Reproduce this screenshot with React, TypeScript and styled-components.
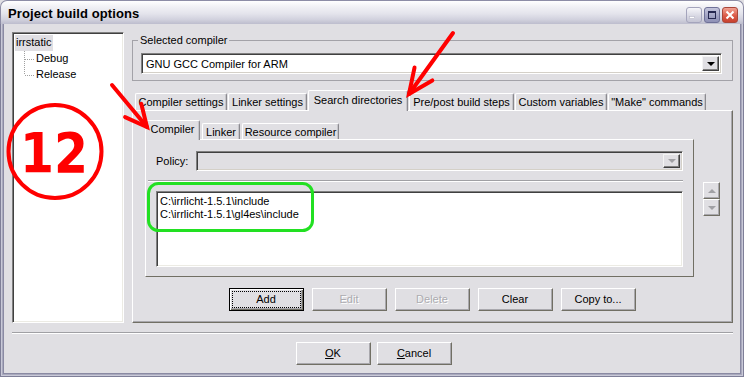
import React from "react";
import styled, { createGlobalStyle, css } from "styled-components";

const FACE = "#E0DFE3";

const GlobalStyle = createGlobalStyle`
  html, body { margin: 0; padding: 0; background: #ffffff; }
  body {
    font-family: "Liberation Sans", Arial, sans-serif;
    font-size: 11px;
    color: #000;
    overflow: hidden;
  }
  * { box-sizing: border-box; }
`;

const Window = styled.div`
  position: relative;
  width: 744px;
  height: 377px;
  display: flex;
  flex-direction: column;
  background: ${FACE};
`;

const TitleBar = styled.div`
  height: 24px;
  flex: none;
  display: flex;
  align-items: center;
  padding: 2px 5px 0 7px;
  border: 1px solid #8d8da6;
  border-bottom: none;
  border-radius: 7px 7px 0 0;
  background: linear-gradient(
    180deg,
    #ffffff 0%,
    #f1f1f5 25%,
    #e4e4ec 55%,
    #d2d2de 80%,
    #bdbdcd 100%
  );
`;

const TitleText = styled.div`
  flex: 1;
  font-size: 13px;
  font-weight: bold;
  color: #000;
  letter-spacing: 0.1px;
`;

const TitleButtons = styled.div`
  display: flex;
  gap: 2px;
  margin-top: 2px;
`;

const TitleBtn = styled.div<{ $kind: "min" | "max" | "close" }>`
  width: 16px;
  height: 16px;
  border-radius: 3px;
  display: flex;
  align-items: center;
  justify-content: center;
  ${(p) =>
    p.$kind === "min" &&
    css`
      border: 1px solid #a4a4bc;
      background: linear-gradient(180deg, #f6f6fa, #d6d6e2 60%, #c4c4d4);
    `}
  ${(p) =>
    p.$kind === "max" &&
    css`
      border: 1px solid #6f7198;
      background: linear-gradient(180deg, #c4c5dc, #9fa1c2 60%, #8f91b6);
    `}
  ${(p) =>
    p.$kind === "close" &&
    css`
      border: 1px solid #a9473a;
      background: linear-gradient(180deg, #f1a394, #dc5a48 55%, #c8412f);
    `}
`;

const Body = styled.div`
  flex: 1;
  display: flex;
  flex-direction: column;
  border: solid #7f7f98;
  border-width: 0 1px 1px 1px;
  padding: 8px 10px 11px 11px;
  box-shadow: inset 1px 0 #c9c9d8, inset -1px 0 #c9c9d8, inset 0 -1px #c9c9d8,
    inset 2px 0 #a9a9bd, inset -2px 0 #a9a9bd, inset 0 -2px #a9a9bd,
    inset 3px 0 #8a8aa3, inset -3px 0 #8a8aa3, inset 0 -3px #8a8aa3;
`;

const MainRow = styled.div`
  display: flex;
  gap: 8px;
  height: 291px;
`;

const Tree = styled.div`
  width: 112px;
  background: #fff;
  border: 1px solid;
  border-color: #808080 #ffffff #ffffff #808080;
  box-shadow: inset 1px 1px #404040, inset -1px -1px #ecebe4;
  padding: 2px 0 0 2px;
  display: flex;
  flex-direction: column;
`;

const TreeRow = styled.div`
  height: 16px;
  display: flex;
  align-items: center;
`;

const TreeText = styled.span<{ $selected?: boolean }>`
  padding: 1px 2px 2px 1px;
  background: ${(p) => (p.$selected ? FACE : "transparent")};
  line-height: 13px;
`;

const RightCol = styled.div`
  flex: 1;
  display: flex;
  flex-direction: column;
`;

const GroupBox = styled.fieldset`
  margin: 0;
  padding: 5px 10px 6px 8px;
  border: 1px solid #a3a2a8;
  min-width: 0;
`;

const GroupLegend = styled.legend`
  padding: 0 2px;
  margin-left: -3px;
  line-height: 16px;
  font-size: 11px;
`;

const Combo = styled.div<{ $disabled?: boolean }>`
  height: ${(p) => (p.$disabled ? 20 : 21)}px;
  display: flex;
  align-items: stretch;
  background: ${(p) => (p.$disabled ? FACE : "#fff")};
  border: 1px solid;
  border-color: #808080 #ffffff #ffffff #808080;
  box-shadow: inset 1px 1px #404040, inset -1px -1px #d4d0c8;
  padding: 2px;
  flex: 1;
`;

const ComboText = styled.div`
  flex: 1;
  display: flex;
  align-items: center;
  padding-left: 2px;
`;

const DropBtn = styled.div`
  width: 17px;
  display: flex;
  align-items: center;
  justify-content: center;
  background: ${FACE};
  border: 1px solid;
  border-color: #f4f4f4 #404040 #404040 #f4f4f4;
  box-shadow: inset -1px -1px #808080;
`;

const Triangle = styled.span<{ $dir?: "up" | "down"; $gray?: boolean }>`
  width: 0;
  height: 0;
  border-left: 4px solid transparent;
  border-right: 4px solid transparent;
  ${(p) =>
    p.$dir === "up"
      ? css`
          border-bottom: 4px solid ${p.$gray ? "#a0a0a4" : "#000"};
        `
      : css`
          border-top: 4px solid ${p.$gray ? "#a0a0a4" : "#000"};
        `}
`;

const TabStrip = styled.div<{ $inner?: boolean }>`
  display: flex;
  align-items: flex-end;
  height: ${(p) => (p.$inner ? 19 : 20)}px;
  gap: ${(p) => (p.$inner ? 2 : 1)}px;
  padding-left: ${(p) => (p.$inner ? 0 : 3)}px;
  margin-top: ${(p) => (p.$inner ? 0 : 9)}px;
  flex: none;
`;

const Tab = styled.div<{ $w: number; $active?: boolean; $inner?: boolean }>`
  width: ${(p) => p.$w}px;
  height: ${(p) =>
    p.$active ? (p.$inner ? 20 : 21) : p.$inner ? 16 : 17}px;
  margin-bottom: ${(p) => (p.$active ? -1 : 0)}px;
  position: relative;
  z-index: ${(p) => (p.$active ? 2 : 0)};
  background: ${FACE};
  border: 1px solid;
  border-bottom: none;
  border-color: #ffffff #8b8a8f #ffffff #ffffff;
  box-shadow: inset -1px 0 #c6c5ca;
  border-radius: 2px 2px 0 0;
  display: flex;
  align-items: center;
  justify-content: center;
  padding-bottom: ${(p) => (p.$active ? 3 : 0)}px;
  white-space: nowrap;
`;

const TabPanel = styled.div`
  flex: 1;
  display: flex;
  flex-direction: column;
  border: 1px solid;
  border-color: #ffffff #716f64 #716f64 #ffffff;
  box-shadow: inset -1px -1px #a9a8ad;
  padding: 9px 0 9px 0;
`;

const PanelTop = styled.div`
  display: flex;
  align-items: flex-start;
  padding-left: 12px;
`;

const InnerTabs = styled.div`
  width: 549px;
  display: flex;
  flex-direction: column;
`;

const InnerPanel = styled.div`
  border: 1px solid;
  border-color: #ffffff #716f64 #716f64 #ffffff;
  padding: 11px 10px 9px 10px;
  display: flex;
  flex-direction: column;
`;

const PolicyRow = styled.div`
  display: flex;
  align-items: center;
  height: 20px;
`;

const PolicyLabel = styled.div`
  width: 40px;
  flex: none;
`;

const Separator = styled.div`
  height: 2px;
  border-top: 1px solid #a0a0a4;
  border-bottom: 1px solid #ffffff;
`;

const InnerSeparator = styled(Separator)`
  margin: 9px 0 9px -8px;
`;

const ListBox = styled.div`
  height: 76px;
  background: #fff;
  border: 1px solid;
  border-color: #808080 #ffffff #ffffff #808080;
  box-shadow: inset 1px 1px #404040, inset -1px -1px #ecebe4;
  padding: 3px 3px;
  line-height: 13px;
`;

const SpinCol = styled.div`
  margin: 62px 0 0 9px;
  display: flex;
  flex-direction: column;
`;

const SpinBtn = styled.div`
  width: 17px;
  height: 17px;
  display: flex;
  align-items: center;
  justify-content: center;
  background: ${FACE};
  border: 1px solid;
  border-color: #ffffff #716f64 #716f64 #ffffff;
  box-shadow: inset -1px -1px #a9a8ad;
`;

const ButtonRow = styled.div`
  display: flex;
  justify-content: center;
  gap: 8px;
  margin-top: 11px;
  padding-right: 1px;
`;

const Button = styled.div<{ $default?: boolean; $disabled?: boolean }>`
  width: 75px;
  height: 23px;
  display: flex;
  padding: 2px;
  background: ${FACE};
  border: 1px solid;
  border-color: #ffffff #716f64 #716f64 #ffffff;
  box-shadow: inset -1px -1px #a9a8ad;
  color: ${(p) => (p.$disabled ? "#acabb0" : "#000")};
  text-shadow: ${(p) => (p.$disabled ? "1px 1px #ffffff" : "none")};
  ${(p) =>
    p.$default &&
    css`
      border-color: #000;
      box-shadow: inset 1px 1px #ffffff, inset -1px -1px #716f64,
        inset -2px -2px #a9a8ad;
    `}
`;

const ButtonLabel = styled.span<{ $focus?: boolean }>`
  flex: 1;
  display: flex;
  align-items: center;
  justify-content: center;
  border: 1px dotted ${(p) => (p.$focus ? "#000" : "transparent")};
  padding-bottom: 1px;
`;

const Accel = styled.span`
  text-decoration: underline;
`;

const FooterSep = styled(Separator)`
  margin-top: 9px;
`;

const FooterButtons = styled.div`
  display: flex;
  justify-content: center;
  gap: 6px;
  margin-top: 8px;
  padding-left: 2px;
`;

const Overlay = styled.svg`
  position: absolute;
  left: 0;
  top: 0;
  pointer-events: none;
  z-index: 10;
`;

function TreeConnector({ last }: { last?: boolean }) {
  return (
    <svg width="20" height="16" viewBox="0 0 20 16">
      <line
        x1="9.5"
        y1="0"
        x2="9.5"
        y2={last ? 8 : 16}
        stroke="#a0a0a0"
        strokeDasharray="1 1"
      />
      <line x1="10" y1="8.5" x2="19" y2="8.5" stroke="#a0a0a0" strokeDasharray="1 1" />
    </svg>
  );
}

function Arrow({
  x1,
  y1,
  x2,
  y2,
  len,
  spread,
}: {
  x1: number;
  y1: number;
  x2: number;
  y2: number;
  len: number;
  spread: number;
}) {
  const a = Math.atan2(y1 - y2, x1 - x2);
  const s = (spread * Math.PI) / 180;
  const w1 = [x2 + len * Math.cos(a + s), y2 + len * Math.sin(a + s)];
  const w2 = [x2 + len * Math.cos(a - s), y2 + len * Math.sin(a - s)];
  return (
    <g stroke="#ff0000" strokeWidth="4" strokeLinecap="round" fill="none">
      <line x1={x1} y1={y1} x2={x2} y2={y2} />
      <polyline points={`${w1[0]},${w1[1]} ${x2},${y2} ${w2[0]},${w2[1]}`} strokeLinejoin="miter" />
    </g>
  );
}

const outerTabs: { label: string; w: number; active?: boolean }[] = [
  { label: "Compiler settings", w: 92 },
  { label: "Linker settings", w: 79 },
  { label: "Search directories", w: 100, active: true },
  { label: "Pre/post build steps", w: 105 },
  { label: "Custom variables", w: 92 },
  { label: "\"Make\" commands", w: 98 },
];

const innerTabs: { label: string; w: number; active?: boolean }[] = [
  { label: "Compiler", w: 55, active: true },
  { label: "Linker", w: 38 },
  { label: "Resource compiler", w: 97 },
];

const actionButtons: { label: string; def?: boolean; disabled?: boolean }[] = [
  { label: "Add", def: true },
  { label: "Edit", disabled: true },
  { label: "Delete", disabled: true },
  { label: "Clear" },
  { label: "Copy to..." },
];

export default function App() {
  return (
    <>
      <GlobalStyle />
      <Window>
        <TitleBar>
          <TitleText>Project build options</TitleText>
          <TitleButtons>
            <TitleBtn $kind="min">
              <svg width="14" height="14" viewBox="0 0 14 14">
                <rect x="2.5" y="8.5" width="5" height="2" fill="#ffffff" stroke="#b8b8c8" strokeWidth="0.6" />
              </svg>
            </TitleBtn>
            <TitleBtn $kind="max">
              <svg width="14" height="14" viewBox="0 0 14 14">
                <rect x="3.5" y="3.5" width="7" height="7" fill="none" stroke="#262850" strokeWidth="1" />
                <line x1="3.5" y1="4.5" x2="10.5" y2="4.5" stroke="#262850" strokeWidth="1" />
              </svg>
            </TitleBtn>
            <TitleBtn $kind="close">
              <svg width="14" height="14" viewBox="0 0 14 14">
                <path d="M3.5 3.5 L10.5 10.5 M10.5 3.5 L3.5 10.5" stroke="#ffffff" strokeWidth="2" />
              </svg>
            </TitleBtn>
          </TitleButtons>
        </TitleBar>
        <Body>
          <MainRow>
            <Tree>
              <TreeRow>
                <TreeText $selected>irrstatic</TreeText>
              </TreeRow>
              <TreeRow>
                <TreeConnector />
                <TreeText>Debug</TreeText>
              </TreeRow>
              <TreeRow>
                <TreeConnector last />
                <TreeText>Release</TreeText>
              </TreeRow>
            </Tree>
            <RightCol>
              <GroupBox>
                <GroupLegend>Selected compiler</GroupLegend>
                <Combo>
                  <ComboText>GNU GCC Compiler for ARM</ComboText>
                  <DropBtn>
                    <Triangle $dir="down" />
                  </DropBtn>
                </Combo>
              </GroupBox>
              <TabStrip>
                {outerTabs.map((t) => (
                  <Tab key={t.label} $w={t.w} $active={t.active}>
                    {t.label}
                  </Tab>
                ))}
              </TabStrip>
              <TabPanel>
                <PanelTop>
                  <InnerTabs>
                    <TabStrip $inner>
                      {innerTabs.map((t) => (
                        <Tab key={t.label} $w={t.w} $active={t.active} $inner>
                          {t.label}
                        </Tab>
                      ))}
                    </TabStrip>
                    <InnerPanel>
                      <PolicyRow>
                        <PolicyLabel>Policy:</PolicyLabel>
                        <Combo $disabled>
                          <ComboText />
                          <DropBtn>
                            <Triangle $dir="down" $gray />
                          </DropBtn>
                        </Combo>
                      </PolicyRow>
                      <InnerSeparator />
                      <ListBox>
                        <div>{"C:\\irrlicht-1.5.1\\include"}</div>
                        <div>{"C:\\irrlicht-1.5.1\\gl4es\\include"}</div>
                      </ListBox>
                    </InnerPanel>
                  </InnerTabs>
                  <SpinCol>
                    <SpinBtn>
                      <Triangle $dir="up" $gray />
                    </SpinBtn>
                    <SpinBtn>
                      <Triangle $dir="down" $gray />
                    </SpinBtn>
                  </SpinCol>
                </PanelTop>
                <ButtonRow>
                  {actionButtons.map((b) => (
                    <Button key={b.label} $default={b.def} $disabled={b.disabled}>
                      <ButtonLabel $focus={b.def}>{b.label}</ButtonLabel>
                    </Button>
                  ))}
                </ButtonRow>
              </TabPanel>
            </RightCol>
          </MainRow>
          <FooterSep />
          <FooterButtons>
            <Button>
              <ButtonLabel>
                <Accel>O</Accel>K
              </ButtonLabel>
            </Button>
            <Button>
              <ButtonLabel>
                <Accel>C</Accel>ancel
              </ButtonLabel>
            </Button>
          </FooterButtons>
        </Body>
        <Overlay width="744" height="377" viewBox="0 0 744 377">
          <circle cx="55" cy="151.5" r="46.5" fill="none" stroke="#ff0000" strokeWidth="4" />
          <text
            x="54"
            y="172"
            textAnchor="middle"
            fill="#ff0000"
            fontFamily="'DejaVu Sans', sans-serif"
            fontWeight="bold"
            fontSize="55"
            textLength="68"
            lengthAdjust="spacingAndGlyphs"
          >
            12
          </text>
          <rect
            x="148.5"
            y="183.5"
            width="164"
            height="47"
            rx="10"
            fill="none"
            stroke="#22e022"
            strokeWidth="3"
          />
          <Arrow x1={112} y1={85} x2={147} y2={127} len={24} spread={26} />
          <Arrow x1={453} y1={33} x2={409} y2={94} len={27} spread={24} />
        </Overlay>
      </Window>
    </>
  );
}
